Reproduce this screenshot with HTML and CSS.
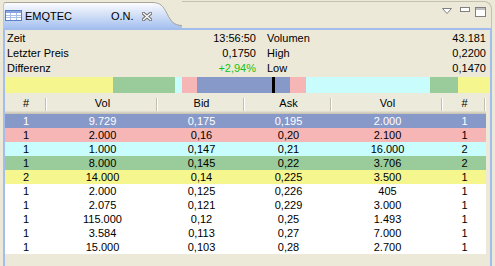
FILE: index.html
```html
<!DOCTYPE html>
<html lang="en">
<head>
    <meta charset="UTF-8">
    <title>EMQTEC O.N.</title>
    <link rel="stylesheet" href="styles.css">
</head>
<body>
    <div class="view">
        <div class="tabbar">
            <div class="tab">
                <svg class="tab-icon" width="17" height="11" viewBox="0 0 17 11">
                    <rect x="0.5" y="0.5" width="16" height="10" fill="#fff" stroke="#5B7FC7"/>
                    <rect x="1" y="1" width="15" height="2" fill="#8AA6DE"/>
                    <path d="M1 5.5H16M1 7.5H16M5.5 3V10M11.5 3V10" stroke="#A9BFE9"/>
                </svg>
                <span class="tab-title">EMQTEC</span>
                <span class="tab-sub">O.N.</span>
                <svg class="tab-close" width="10" height="9" viewBox="0 0 10 9">
                    <path d="M1.5 1.5L8.5 7.5M8.5 1.5L1.5 7.5" stroke="#707070" stroke-width="3.4" stroke-linecap="square"/>
                    <path d="M1.5 1.5L8.5 7.5M8.5 1.5L1.5 7.5" stroke="#fff" stroke-width="1.3" stroke-linecap="square"/>
                </svg>
            </div>
            <svg class="tab-curve" width="30" height="26" viewBox="0 0 30 26">
                <defs>
                    <linearGradient id="tabGrad" x1="0" y1="0" x2="0" y2="26" gradientUnits="userSpaceOnUse">
                        <stop offset="0" stop-color="#FBFCFE"/>
                        <stop offset="0.3" stop-color="#E2EAFA"/>
                        <stop offset="1" stop-color="#A6C2EF"/>
                    </linearGradient>
                </defs>
                <path d="M0 0 C8 0 11 3 15 11 C19 19 22 23 30 23 V26 H0 Z" fill="url(#tabGrad)"/>
                <path d="M0 0.5 C8 0.5 11 3.5 15 11.5 C19 19.5 22 23.5 30 23.5" fill="none" stroke="#A9A695"/>
            </svg>
            <div class="toolbar">
                <svg class="tb-menu" width="10" height="6" viewBox="0 0 10 6">
                    <path d="M0.5 0.5H9.5L5 5.5Z" fill="#fff" stroke="#808080"/>
                </svg>
                <svg class="tb-min" width="10" height="5" viewBox="0 0 10 5">
                    <rect x="0.5" y="0.5" width="9" height="4" fill="#fff" stroke="#808080"/>
                </svg>
                <svg class="tb-max" width="11" height="10" viewBox="0 0 11 10">
                    <rect x="0.5" y="0.5" width="10" height="9" fill="#fff" stroke="#808080"/>
                    <path d="M1 2H10" stroke="#808080"/>
                </svg>
            </div>
        </div>

        <div class="frame">
            <div class="info">
                <div class="info-col left">
                    <div class="info-row"><span>Zeit</span><span>13:56:50</span></div>
                    <div class="info-row"><span>Letzter Preis</span><span>0,1750</span></div>
                    <div class="info-row"><span>Differenz</span><span class="up">+2,94%</span></div>
                </div>
                <div class="info-col right">
                    <div class="info-row"><span>Volumen</span><span>43.181</span></div>
                    <div class="info-row"><span>High</span><span>0,2200</span></div>
                    <div class="info-row"><span>Low</span><span>0,1470</span></div>
                </div>
            </div>

            <div class="bar">
                <div class="seg yellow" style="width:108px"></div>
                <div class="seg green" style="width:62px"></div>
                <div class="seg cyan" style="width:7px"></div>
                <div class="seg pink" style="width:15px"></div>
                <div class="seg blue" style="width:75px"></div>
                <div class="seg mark" style="width:3px"></div>
                <div class="seg blue" style="width:15px"></div>
                <div class="seg pink" style="width:16px"></div>
                <div class="seg cyan" style="width:124px"></div>
                <div class="seg green" style="width:28px"></div>
                <div class="seg yellow" style="width:32px"></div>
            </div>

            <table class="book">
                <colgroup>
                    <col style="width:42px">
                    <col style="width:111px">
                    <col style="width:87px">
                    <col style="width:87px">
                    <col style="width:111px">
                    <col style="width:43px">
                </colgroup>
                <thead>
                    <tr><th>#</th><th>Vol</th><th>Bid</th><th>Ask</th><th>Vol</th><th>#</th></tr>
                </thead>
                <tbody>
                    <tr class="blue light-text"><td>1</td><td>9.729</td><td>0,175</td><td>0,195</td><td>2.000</td><td>1</td></tr>
                    <tr class="pink"><td>1</td><td>2.000</td><td>0,16</td><td>0,20</td><td>2.100</td><td>1</td></tr>
                    <tr class="cyan"><td>1</td><td>1.000</td><td>0,147</td><td>0,21</td><td>16.000</td><td>2</td></tr>
                    <tr class="green"><td>1</td><td>8.000</td><td>0,145</td><td>0,22</td><td>3.706</td><td>2</td></tr>
                    <tr class="yellow"><td>2</td><td>14.000</td><td>0,14</td><td>0,225</td><td>3.500</td><td>1</td></tr>
                    <tr><td>1</td><td>2.000</td><td>0,125</td><td>0,226</td><td>405</td><td>1</td></tr>
                    <tr><td>1</td><td>2.075</td><td>0,121</td><td>0,229</td><td>3.000</td><td>1</td></tr>
                    <tr><td>1</td><td>115.000</td><td>0,12</td><td>0,25</td><td>1.493</td><td>1</td></tr>
                    <tr><td>1</td><td>3.584</td><td>0,113</td><td>0,27</td><td>7.000</td><td>1</td></tr>
                    <tr><td>1</td><td>15.000</td><td>0,103</td><td>0,28</td><td>2.700</td><td>1</td></tr>
                </tbody>
            </table>
        </div>
    </div>
</body>
</html>
```

FILE: styles.css
```css
body {
    margin: 0;
    background: #ECE9D8;
    font-family: 'Liberation Sans', Arial, sans-serif;
    font-size: 11px;
    color: #000;
}
.tabbar {
    display: flex;
    align-items: flex-start;
    height: 28px;
}
.tab {
    display: flex;
    align-items: center;
    height: 25px;
    margin: 2px 0 0 3px;
    border-top: 1px solid #A9A695;
    border-left: 1px solid #C9C6B8;
    border-top-left-radius: 3px;
    width: 148px;
    background: linear-gradient(to bottom, #FBFCFE 0%, #E2EAFA 30%, #A6C2EF 100%);
}
.tab-icon {
    margin-left: 1px;
    flex: none;
}
.tab-title {
    margin-left: 3px;
    width: 86px;
}
.tab-sub {
    width: 31px;
}
.tab-close {
    flex: none;
    margin-top: 1px;
}
.tab-curve {
    flex: none;
    margin-top: 2px;
}
.toolbar {
    flex: 1;
    display: flex;
    justify-content: flex-end;
    align-items: flex-start;
    height: 26px;
    margin: 1px 3px 0 0;
    padding-right: 5px;
    border-top: 1px solid #C4C1B1;
    border-right: 1px solid #C4C1B1;
    border-top-right-radius: 8px;
}
.tb-menu {
    margin-top: 6px;
}
.tb-min {
    margin: 5px 0 0 8px;
}
.tb-max {
    margin: 5px 0 0 5px;
}
.frame {
    margin: 0 3px;
    border: 2px solid #A3BEEC;
    border-bottom: none;
    height: 236px;
}
.info {
    display: flex;
    gap: 10px;
    padding: 1px 4px 0 2px;
}
.info-col.left {
    width: 249px;
    padding-right: 1px;
}
.info-col.right {
    width: 219px;
}
.info-row {
    display: flex;
    justify-content: space-between;
    line-height: 15px;
    white-space: nowrap;
}
.up {
    color: #14C414;
}
.bar {
    display: flex;
    height: 16px;
    margin-top: 1px;
}
.seg {
    flex: none;
}
.yellow { background: #F6F68F; }
.green { background: #9ACB9A; }
.cyan { background: #C9FCFD; }
.pink { background: #F7B6B6; }
.blue { background: #8799C9; }
.mark { background: #000; }
.book {
    width: 481px;
    table-layout: fixed;
    border-collapse: separate;
    border-spacing: 0;
}
.book th {
    padding: 0;
    font-weight: normal;
    line-height: 20px;
    background: #EBEADB linear-gradient(to right, #C3C0B1 50%, #fff 50%) no-repeat right 0 top 5px / 2px 13px;
    border-bottom: 1px solid #CBC7B8;
    box-shadow: inset 0 -1px 0 #D6D2C2, inset 0 -2px 0 #E2DECD;
}
.book td {
    padding: 0;
    line-height: 14px;
    text-align: center;
    white-space: nowrap;
}
.book tbody tr {
    background: #fff;
}
.book tbody tr.blue { background: #8799C9; }
.book tbody tr.pink { background: #F7B6B6; }
.book tbody tr.cyan { background: #C9FCFD; }
.book tbody tr.green { background: #9ACB9A; }
.book tbody tr.yellow { background: #F6F68F; }
.light-text td {
    color: #fff;
}
```
